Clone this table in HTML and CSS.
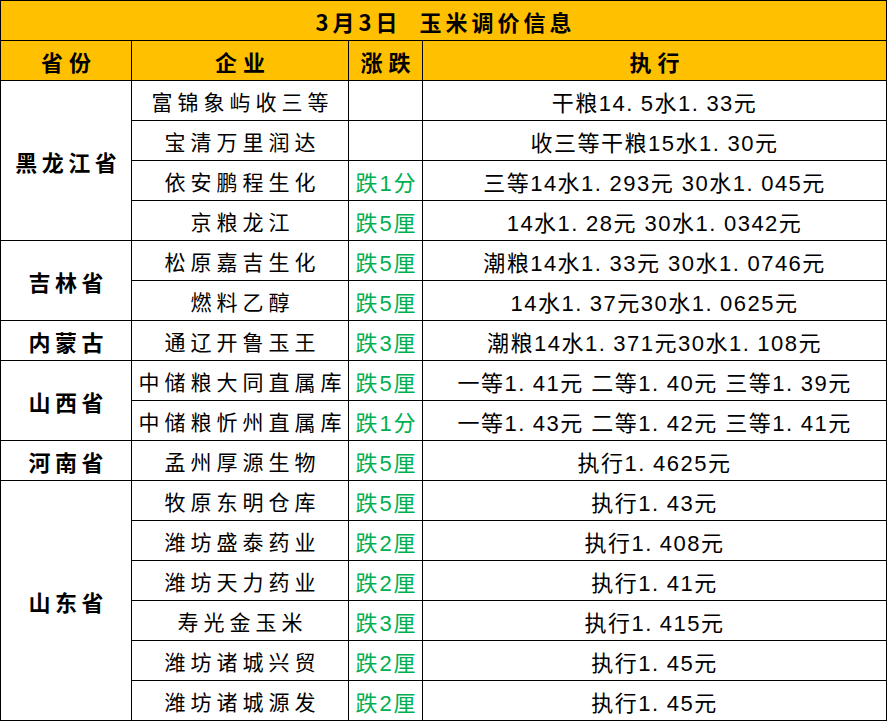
FILE: index.html
```html
<!DOCTYPE html>
<html lang="zh-CN">
<head>
<meta charset="utf-8">
<title>3月3日 玉米调价信息</title>
<link rel="stylesheet" href="styles.css">
</head>
<body>
<table class="price-table">
  <colgroup>
    <col class="c-prov">
    <col class="c-corp">
    <col class="c-chg">
    <col class="c-exec">
  </colgroup>
  <thead>
    <tr class="title-row"><th colspan="4">3月3日&nbsp;&nbsp;玉米调价信息</th></tr>
    <tr class="head-row"><th>省份</th><th>企业</th><th>涨跌</th><th>执行</th></tr>
  </thead>
  <tbody>
    <tr><td class="prov" rowspan="4">黑龙江省</td><td class="corp">富锦象屿收三等</td><td class="chg"></td><td class="exec">干粮14<span class="pt">.</span>5水1<span class="pt">.</span>33元</td></tr>
    <tr><td class="corp">宝清万里润达</td><td class="chg"></td><td class="exec">收三等干粮15水1<span class="pt">.</span>30元</td></tr>
    <tr><td class="corp">依安鹏程生化</td><td class="chg">跌1分</td><td class="exec">三等14水1<span class="pt">.</span>293元&nbsp;30水1<span class="pt">.</span>045元</td></tr>
    <tr><td class="corp">京粮龙江</td><td class="chg">跌5厘</td><td class="exec">14水1<span class="pt">.</span>28元&nbsp;30水1<span class="pt">.</span>0342元</td></tr>
    <tr><td class="prov" rowspan="2">吉林省</td><td class="corp">松原嘉吉生化</td><td class="chg">跌5厘</td><td class="exec">潮粮14水1<span class="pt">.</span>33元&nbsp;30水1<span class="pt">.</span>0746元</td></tr>
    <tr><td class="corp">燃料乙醇</td><td class="chg">跌5厘</td><td class="exec">14水1<span class="pt">.</span>37元30水1<span class="pt">.</span>0625元</td></tr>
    <tr><td class="prov">内蒙古</td><td class="corp">通辽开鲁玉王</td><td class="chg">跌3厘</td><td class="exec">潮粮14水1<span class="pt">.</span>371元30水1<span class="pt">.</span>108元</td></tr>
    <tr><td class="prov" rowspan="2">山西省</td><td class="corp">中储粮大同直属库</td><td class="chg">跌5厘</td><td class="exec">一等1<span class="pt">.</span>41元&nbsp;二等1<span class="pt">.</span>40元&nbsp;三等1<span class="pt">.</span>39元</td></tr>
    <tr><td class="corp">中储粮忻州直属库</td><td class="chg">跌1分</td><td class="exec">一等1<span class="pt">.</span>43元&nbsp;二等1<span class="pt">.</span>42元&nbsp;三等1<span class="pt">.</span>41元</td></tr>
    <tr><td class="prov">河南省</td><td class="corp">孟州厚源生物</td><td class="chg">跌5厘</td><td class="exec">执行1<span class="pt">.</span>4625元</td></tr>
    <tr><td class="prov" rowspan="6">山东省</td><td class="corp">牧原东明仓库</td><td class="chg">跌5厘</td><td class="exec">执行1<span class="pt">.</span>43元</td></tr>
    <tr><td class="corp">潍坊盛泰药业</td><td class="chg">跌2厘</td><td class="exec">执行1<span class="pt">.</span>408元</td></tr>
    <tr><td class="corp">潍坊天力药业</td><td class="chg">跌2厘</td><td class="exec">执行1<span class="pt">.</span>41元</td></tr>
    <tr><td class="corp">寿光金玉米</td><td class="chg">跌3厘</td><td class="exec">执行1<span class="pt">.</span>415元</td></tr>
    <tr><td class="corp">潍坊诸城兴贸</td><td class="chg">跌2厘</td><td class="exec">执行1<span class="pt">.</span>45元</td></tr>
    <tr><td class="corp">潍坊诸城源发</td><td class="chg">跌2厘</td><td class="exec">执行1<span class="pt">.</span>45元</td></tr>
  </tbody>
</table>
</body>
</html>
```

FILE: styles.css
```css
html, body {
  margin: 0;
  padding: 0;
  background: #ffffff;
}

body {
  font-family: "Liberation Sans", "Noto Sans CJK SC", sans-serif;
  color: #000000;
}

.price-table {
  border-collapse: collapse;
  table-layout: fixed;
  width: 886px;
}

.c-prov { width: 131px; }
.c-corp { width: 217px; }
.c-chg { width: 74px; }
.c-exec { width: 464px; }

.price-table th,
.price-table td {
  border: 1px solid #000000;
  padding: 0;
  text-align: center;
  vertical-align: middle;
  white-space: nowrap;
  overflow: hidden;
}

.price-table tr {
  height: 40px;
}

.title-row th,
.head-row th {
  background: #ffc000;
  font-family: "Noto Sans CJK SC", sans-serif;
  font-weight: 700;
  font-size: 22px;
}

.title-row th {
  letter-spacing: 4px;
  text-indent: 4px;
}

.head-row th {
  letter-spacing: 6px;
  text-indent: 6px;
}

.prov {
  font-family: "Noto Sans CJK SC", sans-serif;
  font-weight: 700;
  font-size: 22px;
  letter-spacing: 4.5px;
  text-indent: 4.5px;
}

.corp {
  font-family: "Noto Sans CJK SC", sans-serif;
  font-size: 21px;
  letter-spacing: 5px;
  text-indent: 5px;
}

.chg {
  color: #00b050;
  font-size: 22px;
  letter-spacing: 2px;
  text-indent: 2px;
}

.exec {
  font-size: 22px;
  letter-spacing: 1.5px;
}

.pt {
  margin-right: 7px;
}
```
